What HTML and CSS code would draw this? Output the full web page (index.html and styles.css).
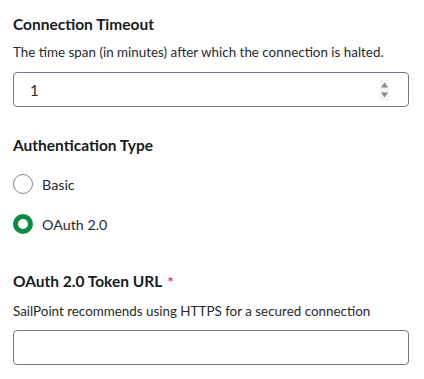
FILE: index.html
```html
<!DOCTYPE html>
<html lang="en">

<head>
    <meta charset="UTF-8">
    <meta name="viewport" content="width=device-width, initial-scale=1.0">
    <title>Connection settings</title>
    <link rel="stylesheet" href="styles.css">
</head>

<body>

    <div class="container">
        <!-- Connection timeout -->
        <div class="section first">
            <div class="field-title">Connection Timeout</div>
            <div class="field-help">The time span (in minutes) after which the connection is halted.</div>
            <div class="text-box number-box">
                <span class="value">1</span>
                <svg class="spin" width="9" height="20" viewBox="0 0 9 20">
                    <rect x="0" y="0" width="9" height="20" fill="#f3f3f3"/>
                    <polygon points="4.5,2.5 8,7.5 1,7.5" fill="#8c8c8c"/>
                    <polygon points="1,12.5 8,12.5 4.5,17.5" fill="#8c8c8c"/>
                </svg>
            </div>
        </div>

        <!-- Authentication type -->
        <div class="section">
            <div class="field-title">Authentication Type</div>
            <div class="radio-group">
                <div class="radio-row">
                    <span class="radio"></span>
                    <span class="radio-label">Basic</span>
                </div>
                <div class="radio-row">
                    <span class="radio checked"></span>
                    <span class="radio-label">OAuth 2.0</span>
                </div>
            </div>
        </div>

        <!-- Token URL -->
        <div class="section last">
            <div class="field-title">OAuth 2.0 Token URL <span class="required">*</span></div>
            <div class="field-help">SailPoint recommends using HTTPS for a secured connection</div>
            <div class="text-box"></div>
        </div>
    </div>

</body>

</html>
```

FILE: styles.css
```css
body {
    margin: 0;
    font-family: "Lato", "Noto Sans", sans-serif;
    color: #262a2e;
    background: #fff;
}

.container {
    padding: 14px 15px 0 13px;
}

.field-title {
    font-size: 15.5px;
    font-weight: bold;
    line-height: 20px;
    color: #181b1f;
}

.required {
    color: #e0235a;
    font-size: 14px;
    margin-left: 2px;
}

.field-help {
    font-size: 13.4px;
    line-height: 20px;
    margin-top: 8px;
}

.text-box {
    box-sizing: border-box;
    height: 35px;
    margin-top: 10px;
    border: 1px solid #6f7a86;
    border-radius: 4px;
    background: #fff;
}

.number-box {
    display: flex;
    align-items: center;
    justify-content: space-between;
    padding: 0 19px 0 16px;
    font-size: 15px;
}

.section.first + .section {
    margin-top: 28px;
}

.radio-group {
    margin-top: 19px;
    display: flex;
    flex-direction: column;
    gap: 20px;
}

.radio-row {
    display: flex;
    align-items: center;
    height: 20px;
}

.radio {
    box-sizing: border-box;
    width: 20px;
    height: 20px;
    border: 1.5px solid #7a8590;
    border-radius: 50%;
    background: #fff;
}

.radio.checked {
    border: 5px solid #0a8a43;
}

.radio-label {
    margin-left: 9px;
    font-size: 14.3px;
}

.section.last {
    margin-top: 37px;
}

.section.last .field-help {
    margin-top: 9px;
}

.section.last .text-box {
    margin-top: 9px;
}
```
